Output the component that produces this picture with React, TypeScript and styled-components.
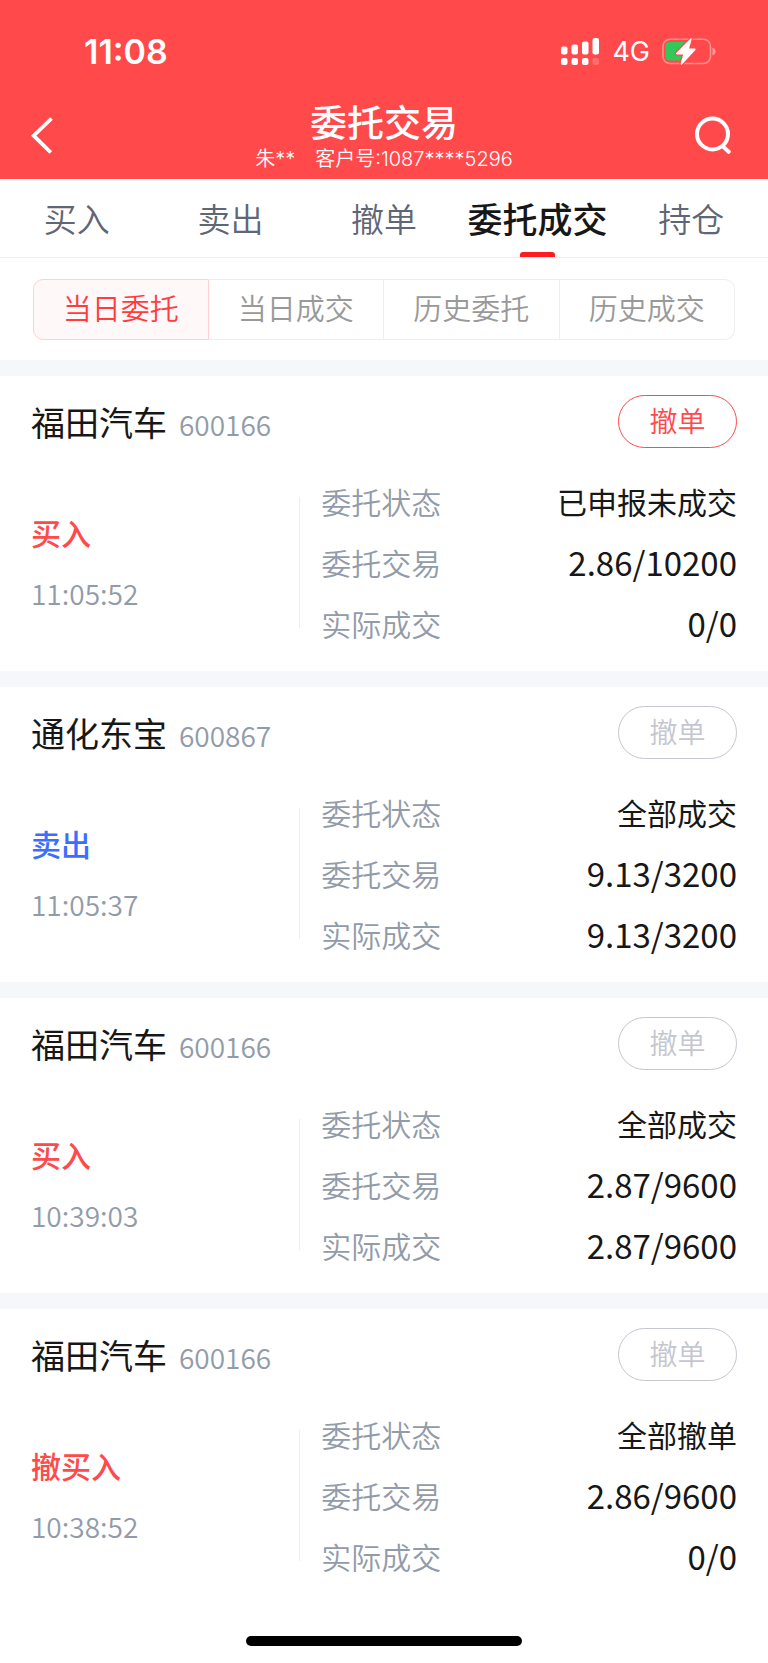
import React, { useState } from 'react';
import styled, { createGlobalStyle } from 'styled-components';

const cjk = '"Noto Sans CJK SC", "Noto Sans", sans-serif';
const latin = 'Inter, "Noto Sans CJK SC", sans-serif';

const color = {
  brand: '#ff494b',
  indicator: '#fd1c1f',
  ink: '#171717',
  slate: '#5f6675',
  muted: '#929ba9',
  filter: '#999999',
  disabled: '#c4c7d0',
  sell: '#3b6eff',
  line: '#eceef2',
  band: '#f6f7fa',
};

const GlobalStyle = createGlobalStyle`
  *, *::before, *::after { box-sizing: border-box; }
  body { margin: 0; background: #fff; font-family: ${cjk}; color: ${color.ink}; }
  button { font-family: inherit; margin: 0; padding: 0; border: 0; background: none; cursor: pointer; }
  h1, h2, p, dl, dt, dd { margin: 0; font-weight: 400; }
`;

const Page = styled.div`
  display: flex;
  flex-direction: column;
  min-height: 100vh;
`;

const TopArea = styled.header`
  background: ${color.brand};
  color: #fff;
`;

const StatusBar = styled.div`
  display: flex;
  align-items: center;
  justify-content: space-between;
  height: 91px;
  padding: 12px 52px 0 84px;
  font-family: ${latin};
`;

const Clock = styled.time`
  font-size: 34px;
  line-height: 40px;
  font-weight: 600;
`;

const StatusIcons = styled.div`
  display: flex;
  align-items: center;
  gap: 12px;
`;

const Network = styled.span`
  font-size: 27px;
  line-height: 32px;
`;

const NavBar = styled.div`
  display: grid;
  grid-template-columns: 64px 1fr 64px;
  align-items: center;
  height: 88px;
  padding: 0 31px;
`;

const IconButton = styled.button<{ $end?: boolean }>`
  display: flex;
  align-items: center;
  justify-content: ${(p) => (p.$end ? 'flex-end' : 'flex-start')};
  height: 64px;
  padding-right: ${(p) => (p.$end ? 6 : 0)}px;
  color: inherit;
`;

const Heading = styled.div`
  padding-top: 4px;
  text-align: center;
`;

const Title = styled.h1`
  && { font-weight: 500; }
  font-size: 37px;
  line-height: 44px;
`;

const Account = styled.p`
  display: flex;
  justify-content: center;
  gap: 20px;
  font-family: ${latin};
  font-size: 20px;
  line-height: 32px;
  && { font-weight: 350; }
`;

const TabBar = styled.nav`
  display: grid;
  grid-template-columns: repeat(5, 1fr);
  height: 79px;
  border-bottom: 1px solid ${color.line};
`;

const Tab = styled.button<{ $active: boolean }>`
  display: flex;
  flex-direction: column;
  align-items: center;
  justify-content: space-between;
  padding-top: 15px;
  font-size: ${(p) => (p.$active ? 35 : 33)}px;
  line-height: 48px;
  font-weight: ${(p) => (p.$active ? 500 : 350)};
  color: ${(p) => (p.$active ? color.ink : color.slate)};
  white-space: nowrap;

  &::after {
    content: '';
    width: 35px;
    height: 5px;
    border-radius: 3px 3px 0 0;
    background: ${(p) => (p.$active ? color.indicator : 'transparent')};
  }
`;

const FilterBar = styled.div`
  padding: 21px 33px 20px;
`;

const FilterGroup = styled.div`
  display: grid;
  grid-template-columns: repeat(4, 1fr);
`;

const Filter = styled.button<{ $active: boolean }>`
  height: 61px;
  padding-bottom: 5px;
  border: 1px solid ${(p) => (p.$active ? '#ffd0d1' : color.line)};
  border-left-width: ${(p) => (p.$active ? 1 : 0)}px;
  background: ${(p) => (p.$active ? '#fff8f8' : '#fff')};
  color: ${(p) => (p.$active ? '#ff3d3f' : color.filter)};
  font-size: 29px;
  line-height: 40px;
  font-weight: 350;

  &:first-child { border-radius: 10px 0 0 10px; }
  &:last-child { border-radius: 0 10px 10px 0; }
`;

const OrderList = styled.main`
  flex: 1;
`;

const Card = styled.article`
  border-top: 16px solid ${color.band};
  padding: 19px 31px 17px;
`;

const CardHead = styled.div`
  display: flex;
  align-items: center;
  justify-content: space-between;
  height: 53px;
  margin-bottom: 23px;
`;

const Stock = styled.h2`
  display: flex;
  align-items: baseline;
  gap: 12px;
  font-size: 34px;
  line-height: 48px;
`;

const Code = styled.span`
  font-size: 28px;
  line-height: 40px;
  font-weight: 350;
  color: ${color.muted};
`;

const CancelButton = styled.button`
  width: 119px;
  height: 53px;
  padding-bottom: 4px;
  border: 1px solid currentColor;
  border-radius: 27px;
  font-size: 28px;
  line-height: 40px;
  font-weight: 350;
  color: ${color.brand};

  &:disabled { color: ${color.disabled}; cursor: default; }
`;

const CardBody = styled.div`
  display: grid;
  grid-template-columns: 38% 1fr;
  align-items: center;
`;

const Summary = styled.div`
  line-height: 61px;
`;

const Side = styled.p<{ $sell: boolean }>`
  && { font-weight: 500; }
  font-size: 30px;
  color: ${(p) => (p.$sell ? color.sell : color.brand)};
`;

const Time = styled.time`
  display: block;
  font-size: 28px;
  font-weight: 350;
  color: ${color.muted};
`;

const Details = styled.dl`
  display: grid;
  grid-template-columns: auto 1fr;
  padding-left: 22px;
  font-size: 30px;
  line-height: 61px;
  background: linear-gradient(${color.line}, ${color.line}) left center / 1px 131px no-repeat;
`;

const Label = styled.dt`
  && { font-weight: 350; }
  color: ${color.muted};
`;

const Value = styled.dd<{ $numeric?: boolean }>`
  font-size: ${(p) => (p.$numeric ? 33 : 30)}px;
  text-align: right;
`;

const HomeArea = styled.footer`
  display: flex;
  justify-content: center;
  padding: 32px 0 17px;

  &::after {
    content: '';
    width: 36%;
    height: 10px;
    border-radius: 5px;
    background: #000;
  }
`;

const SignalIcon = () => (
  <svg width="39" height="28" viewBox="0 0 39 28" fill="#fff" aria-hidden="true">
    <rect x="0" y="8.5" width="6.5" height="8" rx="2" />
    <rect x="10.5" y="6.5" width="6.5" height="10" rx="2" />
    <rect x="21" y="3.5" width="6.5" height="13" rx="2" />
    <rect x="31.5" y="0" width="6.5" height="16.5" rx="2" />
    <rect x="0" y="20" width="6.5" height="7" rx="2" />
    <rect x="10.5" y="20" width="6.5" height="7" rx="2" />
    <rect x="21" y="20" width="6.5" height="7" rx="2" />
    <rect x="31.5" y="20" width="6.5" height="7" rx="2" fillOpacity="0.2" />
  </svg>
);

const BatteryIcon = () => (
  <svg width="54" height="28" viewBox="0 0 54 28" aria-hidden="true">
    <rect x="1" y="1.2" width="47.5" height="24.3" rx="7" fill="none" stroke="#fff" strokeOpacity="0.4" strokeWidth="1.6" />
    <path d="M50.5 9.500v8c1.9-.7 3-2.2 3-4s-1.100-3.300-3-4z" fill="#fff" fillOpacity="0.45" />
    <path d="M7.500 4H24v18.500H7.500a4 4 0 0 1-4-4V8a4 4 0 0 1 4-4z" fill="#34c759" />
    <path
      d="M28.500.5 14.200 14.900c-.6.6-.2 1.500.6 1.500h6.400l-2.600 9.200c-.3 1 .7 1.500 1.400.8l13.400-14.500c.5-.6.2-1.500-.6-1.500h-5.700l2.600-9.100c.3-1-.5-1.500-1.200-.8z"
      fill="#fff"
      stroke={color.brand}
      strokeWidth="2.400"
      paintOrder="stroke"
    />
  </svg>
);

const BackIcon = () => (
  <svg width="24" height="38" viewBox="0 0 24 38" fill="none" stroke="#fff" strokeWidth="3.800" aria-hidden="true">
    <path d="M20.500 2.500 2.700 19.700 19.800 36.500" />
  </svg>
);

const SearchIcon = () => (
  <svg width="36" height="38" viewBox="0 0 36 38" fill="none" stroke="#fff" strokeWidth="4" aria-hidden="true">
    <circle cx="17.500" cy="18" r="15.500" />
    <path d="m26.500 29 8.500 8" />
  </svg>
);

type Order = {
  name: string;
  code: string;
  side: string;
  sell?: boolean;
  time: string;
  status: string;
  placed: string;
  filled: string;
  cancellable?: boolean;
};

const orders: Order[] = [
  { name: '福田汽车', code: '600166', side: '买入', time: '11:05:52', status: '已申报未成交', placed: '2.86/10200', filled: '0/0', cancellable: true },
  { name: '通化东宝', code: '600867', side: '卖出', sell: true, time: '11:05:37', status: '全部成交', placed: '9.13/3200', filled: '9.13/3200' },
  { name: '福田汽车', code: '600166', side: '买入', time: '10:39:03', status: '全部成交', placed: '2.87/9600', filled: '2.87/9600' },
  { name: '福田汽车', code: '600166', side: '撤买入', time: '10:38:52', status: '全部撤单', placed: '2.86/9600', filled: '0/0' },
];

const tabs = ['买入', '卖出', '撤单', '委托成交', '持仓'];
const filters = ['当日委托', '当日成交', '历史委托', '历史成交'];

const OrderCard = ({ order }: { order: Order }) => (
  <Card>
    <CardHead>
      <Stock>
        {order.name}
        <Code>{order.code}</Code>
      </Stock>
      <CancelButton type="button" disabled={!order.cancellable}>撤单</CancelButton>
    </CardHead>
    <CardBody>
      <Summary>
        <Side $sell={!!order.sell}>{order.side}</Side>
        <Time>{order.time}</Time>
      </Summary>
      <Details>
        <Label>委托状态</Label>
        <Value>{order.status}</Value>
        <Label>委托交易</Label>
        <Value $numeric>{order.placed}</Value>
        <Label>实际成交</Label>
        <Value $numeric>{order.filled}</Value>
      </Details>
    </CardBody>
  </Card>
);

export default function App() {
  const [tab, setTab] = useState('委托成交');
  const [filter, setFilter] = useState('当日委托');

  return (
    <Page>
      <GlobalStyle />
      <TopArea>
        <StatusBar>
          <Clock>11:08</Clock>
          <StatusIcons>
            <SignalIcon />
            <Network>4G</Network>
            <BatteryIcon />
          </StatusIcons>
        </StatusBar>
        <NavBar>
          <IconButton type="button" aria-label="返回"><BackIcon /></IconButton>
          <Heading>
            <Title>委托交易</Title>
            <Account>
              <span>朱**</span>
              <span>客户号:1087****5296</span>
            </Account>
          </Heading>
          <IconButton type="button" aria-label="搜索" $end><SearchIcon /></IconButton>
        </NavBar>
      </TopArea>
      <TabBar>
        {tabs.map((t) => (
          <Tab key={t} type="button" $active={t === tab} onClick={() => setTab(t)}>{t}</Tab>
        ))}
      </TabBar>
      <FilterBar>
        <FilterGroup>
          {filters.map((f) => (
            <Filter key={f} type="button" $active={f === filter} onClick={() => setFilter(f)}>{f}</Filter>
          ))}
        </FilterGroup>
      </FilterBar>
      <OrderList>
        {orders.map((o) => (
          <OrderCard key={o.time} order={o} />
        ))}
      </OrderList>
      <HomeArea />
    </Page>
  );
}
